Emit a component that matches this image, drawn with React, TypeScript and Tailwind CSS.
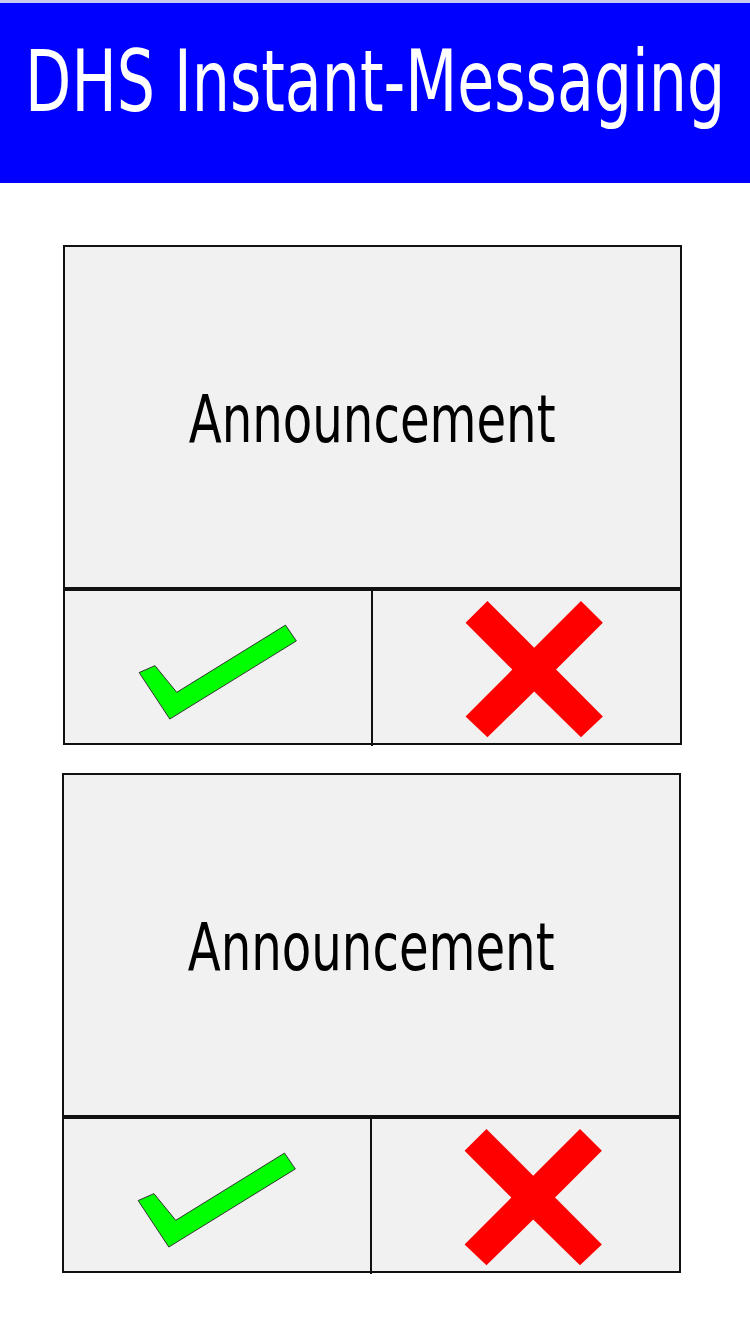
function Check() {
	return (
		<svg className="h-full w-full" viewBox="0 0 309 156">
			<polygon
				points="75,82 91,75 113,102 223,34 234,50 106,129"
				fill="#00ff00"
				stroke="#333"
				strokeWidth="1"
			/>
		</svg>
	)
}

function Cross() {
	return (
		<svg className="h-full w-full" viewBox="0 0 309 156">
			<polygon
				points="115,10 162,57 209,10 231,32 184,79 231,126 209,147 162,101 115,147 93,126 140,79 93,32"
				fill="#ff0000"
			/>
		</svg>
	)
}

function Card({ className }: { className: string }) {
	return (
		<div className={`w-[619px] ${className}`}>
			<div className="flex h-[344px] items-center justify-center overflow-hidden border-2 border-[#111] bg-[#f1f1f1] pt-[5px]">
				<span className="inline-block scale-x-[0.73] font-['DejaVu_Sans',sans-serif] text-[66px] leading-none whitespace-nowrap text-black">
					Announcement
				</span>
			</div>
			<div className="grid h-[156px] grid-cols-2 border-2 border-[#111] bg-[#f1f1f1]">
				<div className="border-r-2 border-[#111]">
					<Check />
				</div>
				<div>
					<Cross />
				</div>
			</div>
		</div>
	)
}

export default function App() {
	return (
		<div className="min-h-[1334px] overflow-hidden bg-white">
			<div className="h-[3px] bg-[#c8c8f0]" />
			<header className="flex h-[180px] items-center justify-center overflow-hidden bg-[#0000ff] pb-[24px]">
				<h1 className="inline-block shrink-0 scale-x-[0.70] font-['DejaVu_Sans',sans-serif] text-[86px] leading-none whitespace-nowrap text-white">
					DHS Instant-Messaging
				</h1>
			</header>
			<Card className="ml-[63px] mt-[62px]" />
			<Card className="ml-[62px] mt-[28px]" />
		</div>
	)
}
